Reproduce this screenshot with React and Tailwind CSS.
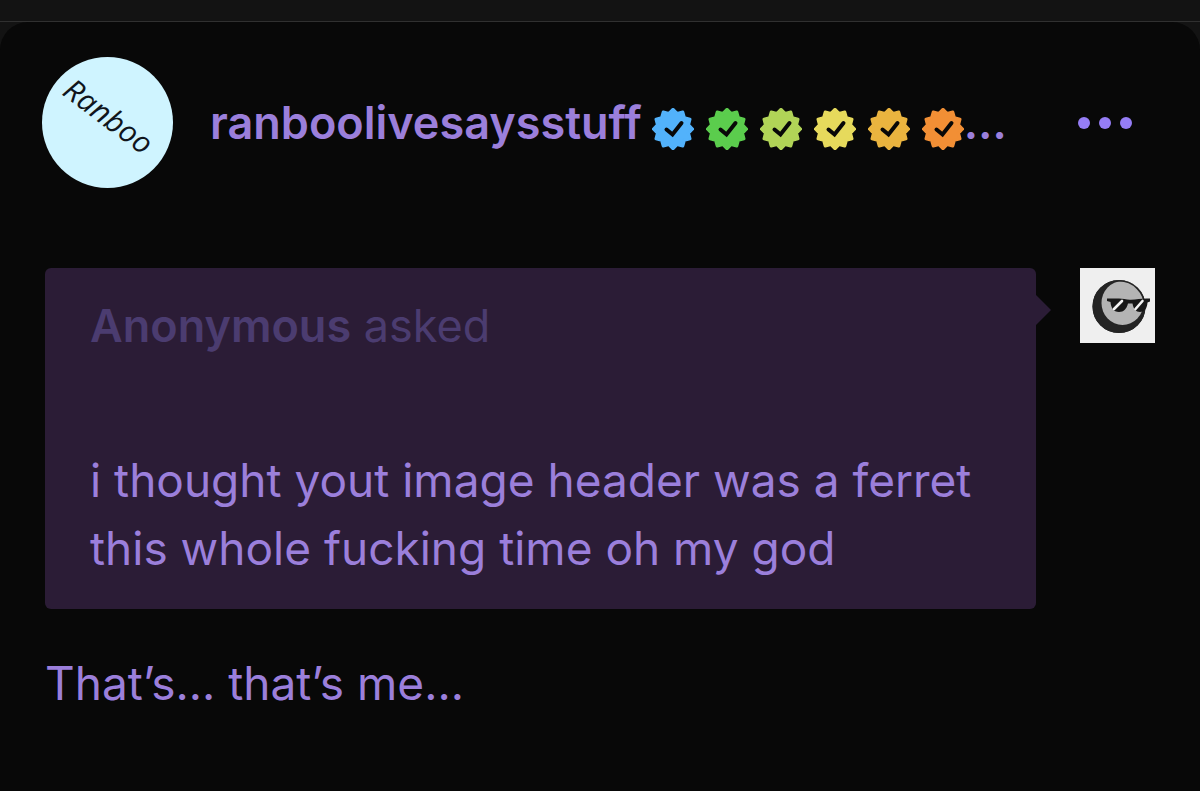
import { clsx } from 'clsx';

const BADGES = [
  { key: 'blue', className: 'text-[#52b2fb]' },
  { key: 'green', className: 'text-[#5bcd4d]' },
  { key: 'lime', className: 'text-[#b1d457]' },
  { key: 'yellow', className: 'text-[#e6da5c]' },
  { key: 'amber', className: 'text-[#eab43f]' },
  { key: 'orange', className: 'text-[#f28f35]' },
];

// twelve-pointed seal, outer and inner radius alternating
const SEAL_POINTS = Array.from({ length: 24 }, (_, i) => {
  const angle = (i * Math.PI) / 12 - Math.PI / 2;
  const r = i % 2 === 0 ? 19.5 : 16;
  return `${(21 + r * Math.cos(angle)).toFixed(2)},${(21 + r * Math.sin(angle)).toFixed(2)}`;
}).join(' ');

function VerifiedBadge({ className }) {
  return (
    <svg viewBox="0 0 42 42" className={clsx('size-[42px] shrink-0', className)} aria-hidden>
      <polygon points={SEAL_POINTS} fill="currentColor" stroke="currentColor" strokeWidth="3.2" strokeLinejoin="round" />
      <path d="M14.500 21.500l6 5L29.500 15" fill="none" stroke="#080808" strokeWidth="4" strokeLinecap="round" strokeLinejoin="miter" />
    </svg>
  );
}

function BlogAvatar() {
  return (
    <a href="#blog" aria-label="ranboolivesaysstuff" className="size-[131px] shrink-0 overflow-hidden rounded-full bg-[#cff4ff]">
      <svg viewBox="0 0 131 131" className="size-full" aria-hidden>
        <text
          x="19"
          y="37"
          transform="rotate(37 19 37)"
          fill="#10151c"
          className="font-['Open_Sans',sans-serif] text-[30px] font-medium italic"
        >
          Ranboo
        </text>
      </svg>
    </a>
  );
}

function AnonymousAvatar() {
  return (
    <svg viewBox="0 0 75 75" className="size-[75px] shrink-0 bg-[#efefef]" role="img" aria-label="Anonymous">
      <circle cx="39" cy="38.5" r="26.5" fill="#242424" />
      <ellipse cx="42.5" cy="35" rx="21" ry="22" fill="#b4b4b4" />
      <circle cx="39" cy="38.5" r="25.700" fill="none" stroke="#242424" strokeWidth="1.600" />
      <path
        d="M27 30.500h12c4 0 8 1.500 12 1.200 6-.4 12-1.700 19-1.200v3l-2.500 1c-.5 6-3 9.500-7.500 9.500-4 0-6.500-3-7.500-8.500h-4.500C46.500 41 44 44 39 44c-5.500 0-8-4-8.500-10L27 33z"
        fill="#181818"
      />
      <path d="M34 41l8-8M55.500 41l7-8" fill="none" stroke="#f4f4f4" strokeWidth="2.600" strokeLinecap="round" />
    </svg>
  );
}

function PostHeader() {
  return (
    <header className="flex items-center px-[42px] pt-[35px]">
      <BlogAvatar />
      <h1 className="ml-[37px] flex min-w-0 flex-1 items-center text-[45px] leading-[60px] font-semibold">
        <a href="#blog" className="whitespace-nowrap">ranboolivesaysstuff</a>
        <span className="ml-2.5 flex gap-3 pt-3">
          {BADGES.map((badge) => (
            <VerifiedBadge key={badge.key} className={badge.className} />
          ))}
        </span>
        <span>…</span>
      </h1>
      <button type="button" aria-label="More options" className="mr-[26px] flex shrink-0 gap-[9px] py-4">
        <span className="size-3 rounded-full bg-[#957df5]" />
        <span className="size-3 rounded-full bg-[#957df5]" />
        <span className="size-3 rounded-full bg-[#957df5]" />
      </button>
    </header>
  );
}

function Ask() {
  return (
    <section className="mt-20 flex items-start px-[45px]">
      <div className="relative flex-1 rounded-md bg-[#2b1c36] px-[45px] pt-6 pb-[27px]">
        <svg viewBox="0 0 15 30" className="absolute top-[27px] left-full h-[30px] w-[15px]" aria-hidden>
          <path d="M0 0l15 15L0 30z" fill="#2b1c36" />
        </svg>
        <p className="text-[45px] leading-[68px] text-[#4b3c70]">
          <strong className="font-semibold">Anonymous</strong> asked
        </p>
        <p className="mt-[86px] text-[46px] leading-[68px]">
          i thought yout image header was a ferret this whole fucking time oh my god
        </p>
      </div>
      <div className="ml-11">
        <AnonymousAvatar />
      </div>
    </section>
  );
}

export default function App() {
  return (
    <div className="flex min-h-screen flex-col bg-[#131313] font-['Inter',sans-serif] text-[#9b7fdb]">
      <div className="h-[22px] border-b border-[#303030]" />
      <article className="flex-1 rounded-t-[28px] bg-[#080808] pb-10">
        <PostHeader />
        <Ask />
        <p className="mt-10 px-[45px] text-[46px] leading-[68px]">That’s… that’s me…</p>
      </article>
    </div>
  );
}
